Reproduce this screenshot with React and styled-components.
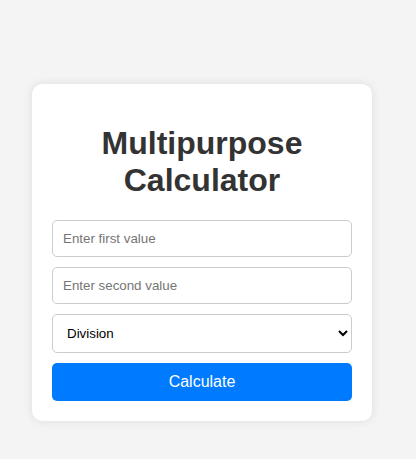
import React from "react";
import styled, { createGlobalStyle } from "styled-components";

const Global = createGlobalStyle`
  html, body {
    margin: 0;
    padding: 0;
    background: #f4f4f4;
    font-family: "Liberation Sans", Arial, sans-serif;
  }
`;

const Page = styled.div`
  padding: 84px 0 38px 32px;
`;

const Card = styled.div`
  box-sizing: border-box;
  width: 340px;
  padding: 20px;
  background: #fff;
  border-radius: 10px;
  box-shadow: 0 0 10px rgba(0, 0, 0, 0.1);
`;

const Title = styled.h1`
  margin: 21.44px 0 20.6px;
  font-size: 32px;
  font-weight: bold;
  color: #333;
  text-align: center;
`;

const Form = styled.div`
  display: flex;
  flex-direction: column;
  gap: 10px;
`;

const Field = styled.input`
  box-sizing: border-box;
  width: 100%;
  margin: 0;
  padding: 10px;
  border: 1px solid #ccc;
  border-radius: 5px;
  font-family: "Liberation Sans", Arial, sans-serif;
  font-size: 13.333px;
  color: #000;
  background: #fff;
  &::placeholder {
    color: #757575;
  }
`;

const Select = styled.select`
  box-sizing: border-box;
  width: 100%;
  margin: 0;
  padding: 10px;
  border: 1px solid #ccc;
  border-radius: 5px;
  font-family: "Liberation Sans", Arial, sans-serif;
  font-size: 13.333px;
  color: #000;
  background: #fff;
`;

const Button = styled.button`
  box-sizing: border-box;
  width: 100%;
  margin: 0;
  padding: 10px;
  border: none;
  border-radius: 5px;
  background: #007bff;
  color: #fff;
  font-family: "Liberation Sans", Arial, sans-serif;
  font-size: 16px;
  cursor: pointer;
`;

export default function App() {
  return (
    <>
      <Global />
      <Page>
        <Card>
          <Title>Multipurpose Calculator</Title>
          <Form>
            <Field type="number" placeholder="Enter first value" />
            <Field type="number" placeholder="Enter second value" />
            <Select defaultValue="division">
              <option value="addition">Addition</option>
              <option value="subtraction">Subtraction</option>
              <option value="multiplication">Multiplication</option>
              <option value="division">Division</option>
            </Select>
            <Button>Calculate</Button>
          </Form>
        </Card>
      </Page>
    </>
  );
}
